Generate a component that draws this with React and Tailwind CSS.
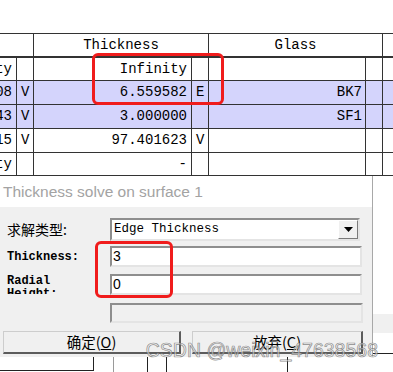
import React from 'react';

const MONO = "font-['Liberation_Mono',monospace]";
const CJK = "font-['Noto_Sans_CJK_SC','Liberation_Sans',sans-serif]";

const ROWS = [
  { r: 'Infinity', v: '', t: 'Infinity', s: '', g: '', blue: false, h: 'h-[23px]' },
  { r: '22.7108', v: 'V', t: '6.559582', s: 'E', g: 'BK7', blue: true, h: 'h-[24px]' },
  { r: '-18.8143', v: 'V', t: '3.000000', s: '', g: 'SF1', blue: true, h: 'h-[24px]' },
  { r: '-78.11415', v: 'V', t: '97.401623', s: 'V', g: '', blue: false, h: 'h-[24px]' },
  { r: 'Infinity', v: '', t: '-', s: '', g: '', blue: false, h: 'h-[23px]' },
];

function LensTable() {
  return (
    <div className={`pt-[33px] text-[14px] text-black ${MONO}`}>
      <div className="flex h-[25px] border-t border-b-2 border-[#333]">
        <div className="w-[34px] shrink-0 border-r border-[#333]" />
        <div className="w-[175px] shrink-0 border-r border-[#333] flex items-center justify-center">Thickness</div>
        <div className="w-[174px] shrink-0 border-r border-[#333] flex items-center justify-center">Glass</div>
        <div className="flex-1" />
      </div>
      {ROWS.map((row, i) => (
        <div key={i} className={`flex ${row.h} border-b border-[#333] ${row.blue ? 'bg-[#d4d4fc]' : 'bg-white'}`}>
          <div className="w-[17px] shrink-0 border-r border-[#333] overflow-hidden flex items-center justify-end pr-[4px] whitespace-nowrap">
            {row.r}
          </div>
          <div className="w-[17px] shrink-0 border-r border-[#333] flex items-center pl-[4px]">{row.v}</div>
          <div className="w-[158px] shrink-0 border-r border-[#333] flex items-center justify-end pr-[4px]">{row.t}</div>
          <div className="w-[17px] shrink-0 border-r border-[#333] flex items-center pl-[4px]">{row.s}</div>
          <div className="w-[157px] shrink-0 border-r border-[#333] flex items-center justify-end pr-[3px]">{row.g}</div>
          <div className="w-[17px] shrink-0 border-r border-[#333]" />
          <div className="flex-1" />
        </div>
      ))}
    </div>
  );
}

function Sunken({ className = '', children }) {
  return (
    <div
      className={`border-2 border-t-[#8e8e8e] border-l-[#8e8e8e] border-b-[#e4e4e4] border-r-[#e4e4e4] ${className}`}
    >
      {children}
    </div>
  );
}

function Button({ children, className = '' }) {
  return (
    <div
      className={`h-[23px] flex items-center justify-center bg-[#f0f0f0] border-t border-l border-t-[#cdcdcd] border-l-[#cdcdcd] border-b-2 border-r-2 border-b-[#5c5c5c] border-r-[#5c5c5c] text-[14.5px] ${CJK} ${className}`}
    >
      {children}
    </div>
  );
}

function SolveDialog() {
  return (
    <div className="absolute left-0 top-[176px] w-[373px] border-r border-[#a8a8a8] bg-white">
      <div className="h-[31px] flex items-center pl-[3px] text-[15.5px] text-[#a3a3a3] font-['Liberation_Sans',sans-serif]">
        Thickness solve on surface 1
      </div>
      <div className="bg-[#f0f0f0] h-[150px] pt-[11px]">
        <div className="flex items-center h-[23px]">
          <div className={`w-[110px] pl-[7px] text-[14px] ${CJK}`}>求解类型:</div>
          <Sunken className="w-[250px] h-[23px] bg-white flex items-center">
            <span className={`pl-[2px] flex-1 text-[12.5px] ${MONO}`}>Edge Thickness</span>
            <div className="w-[20px] h-[19px] flex items-center justify-center bg-[#f0f0f0] border border-t-white border-l-white border-b-[#7a7a7a] border-r-[#7a7a7a]">
              <svg width="9" height="5" viewBox="0 0 9 5">
                <path d="M0 0H9L4.5 5Z" fill="#000" />
              </svg>
            </div>
          </Sunken>
        </div>
        <div className="flex items-center h-[21px] mt-[5px]">
          <div className={`w-[110px] pl-[7px] text-[12px] font-bold ${MONO}`}>Thickness:</div>
          <Sunken className="w-[252px] h-[21px] bg-white flex items-center pl-[1px] text-[14px] font-['Liberation_Sans',sans-serif]">
            3
          </Sunken>
        </div>
        <div className="flex items-start h-[21px] mt-[7px]">
          <div className={`w-[110px] pl-[7px] h-[20px] overflow-hidden text-[12px] font-bold leading-[13px] pt-[1px] ${MONO}`}>
            Radial
            <br />
            Height:
          </div>
          <Sunken className="w-[252px] h-[21px] bg-white flex items-center pl-[1px] text-[14px] font-['Liberation_Sans',sans-serif]">
            0
          </Sunken>
        </div>
        <div className="flex h-[20px] mt-[8px]">
          <div className="w-[110px]" />
          <Sunken className="w-[253px] h-[20px] bg-[#f0f0f0]" />
        </div>
        <div className="flex mt-[8px] pl-[3px]">
          <Button className="w-[178px]">
            确定(<span className="underline">O</span>)
          </Button>
          <Button className="w-[171px] ml-[11px]">
            放弃(<span className="underline">C</span>)
          </Button>
        </div>
      </div>
    </div>
  );
}

export default function App() {
  return (
    <div className="relative w-[393px] h-[372px] overflow-hidden bg-white">
      <LensTable />
      <div className="relative h-[196px]">
        <div className="absolute right-0 top-[138px] w-[21px] h-[19px] bg-[#f0f0f0]" />
        <div className="absolute right-0 top-[177px] w-[22px] h-px bg-[#222]" />
        <div className="absolute left-0 top-[194px] w-[94px] h-px bg-[#222]" />
        <div className="absolute left-[93px] top-[181px] w-px h-[14px] bg-[#222]" />
        <div className="absolute left-[113px] top-[181px] w-px h-[15px] bg-[#9a9a9a]" />
        <div className="absolute left-[147px] top-[181px] w-px h-[15px] bg-[#222]" />
        <div className="absolute left-[166px] top-[181px] w-px h-[15px] bg-[#222]" />
        <div className="absolute left-[287px] top-[181px] w-px h-[15px] bg-[#222]" />
      </div>
      <SolveDialog />
      <div className="absolute left-[92px] top-[53px] w-[132px] h-[52px] border-[3px] border-[#f01c1c] rounded-[6px]" />
      <div className="absolute left-[95px] top-[241px] w-[78px] h-[57px] border-[3px] border-[#f01c1c] rounded-[6px]" />
      <div className="absolute right-[15px] top-[339px] text-[19.5px] leading-[22px] whitespace-nowrap font-['Liberation_Sans',sans-serif] text-[rgba(240,240,240,0.6)] [-webkit-text-stroke:0.7px_rgba(90,90,90,0.7)]">
        CSDN @weixin_47638568
      </div>
    </div>
  );
}
